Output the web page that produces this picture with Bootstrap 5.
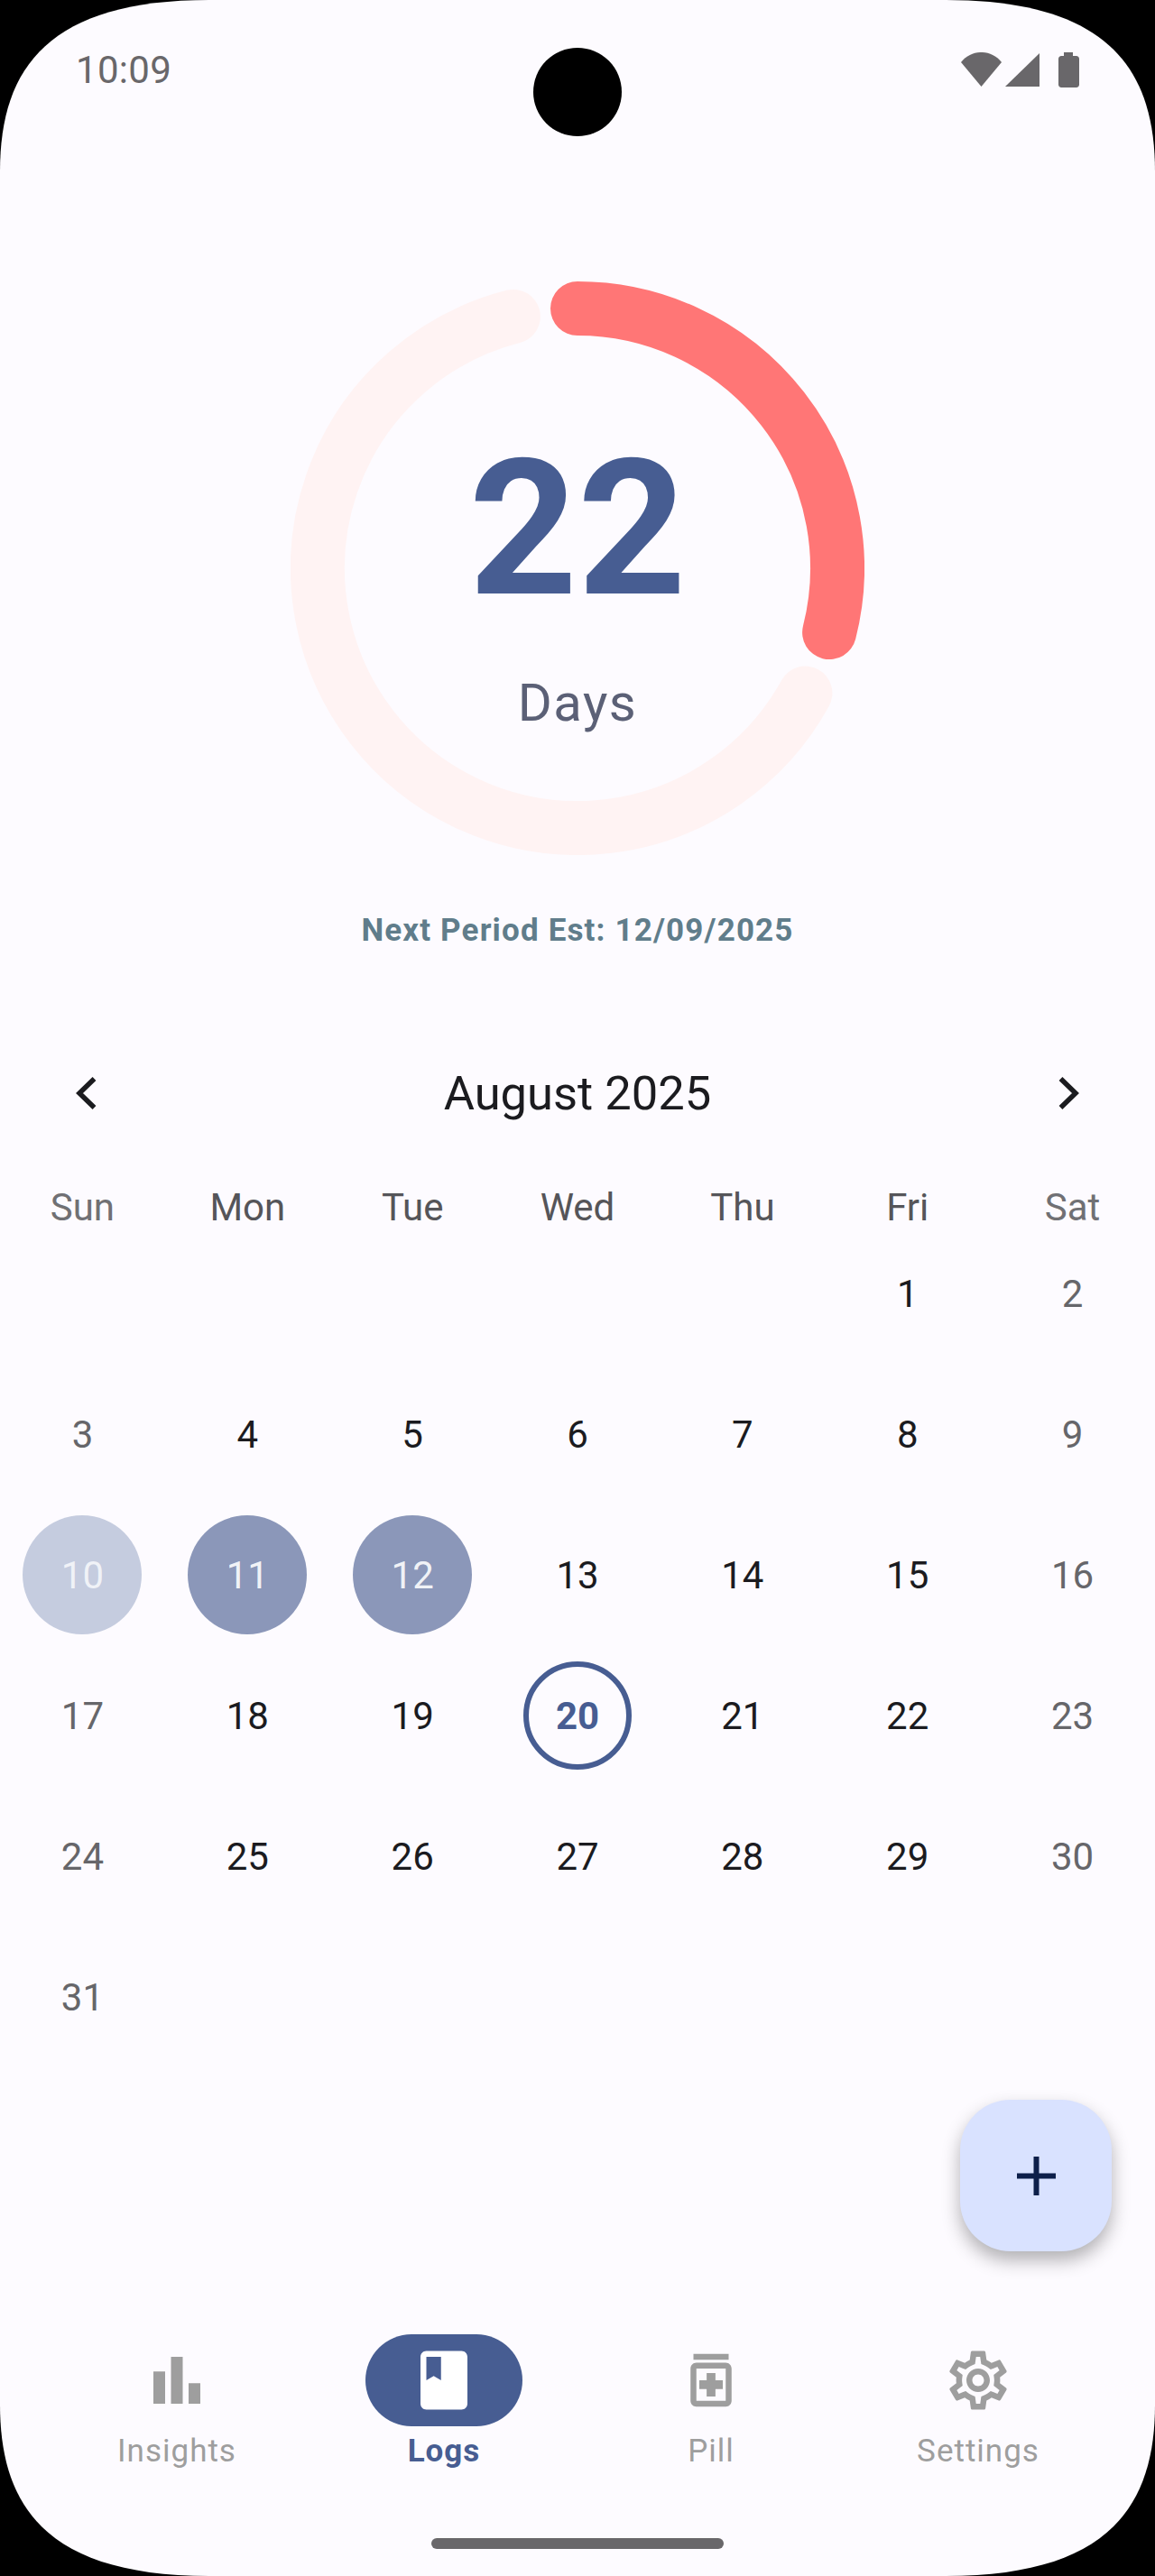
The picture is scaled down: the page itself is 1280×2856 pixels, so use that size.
<!DOCTYPE html>
<html lang="en">
<head>
    <meta charset="UTF-8">
    <meta name="viewport" content="width=device-width, initial-scale=1.0">
    <title>Logs</title>
    <link rel="stylesheet" href="https://cdn.jsdelivr.net/npm/bootstrap@5.3.0/dist/css/bootstrap.min.css">
    <style>
        body {
            background-color: #000;
            font-family: Roboto, "Liberation Sans", sans-serif;
        }
        .phone-screen {
            width: 1280px;
            height: 2856px;
            background-color: #fdfbff;
            clip-path: path('M0 190C0 73 56 0 232 0H1048C1224 0 1280 73 1280 190V2666C1280 2783 1224 2856 1048 2856H232C56 2856 0 2783 0 2666Z');
        }
        .status-bar {
            height: 152px;
            padding: 52px 84px 0 84px;
            font-size: 42px;
            line-height: 52px;
            letter-spacing: 0.3px;
            color: #69676a;
        }
        .camera-hole {
            width: 98px;
            height: 98px;
            top: 53px;
            left: 591px;
            background-color: #000;
        }
        .status-icons {
            left: 1065px;
            top: 58px;
        }
        .ring-box {
            width: 636px;
            height: 636px;
            margin: 160px auto 0;
            display: grid;
        }
        .ring-box > * {
            grid-area: 1 / 1;
        }
        .ring-track {
            stroke: #fff3f3;
        }
        .ring-value {
            stroke: #ff7676;
        }
        .ring-number {
            font-size: 210px;
            font-weight: 700;
            line-height: 246px;
            color: #475d92;
            margin-top: 151px;
        }
        .ring-label {
            font-size: 58px;
            line-height: 66px;
            letter-spacing: 1.5px;
            color: #5b6076;
            margin-top: 37px;
        }
        .next-period {
            height: 60px;
            margin-top: 54px;
            font-size: 35px;
            font-weight: 700;
            line-height: 60px;
            letter-spacing: 1.15px;
            color: #607d8b;
        }
        .cal-header {
            height: 104px;
            margin-top: 98px;
            padding: 0 84px;
            color: #1b1b1f;
        }
        .cal-title {
            font-size: 52.5px;
            line-height: 104px;
        }
        .week-row {
            height: 60px;
            margin-top: 44px;
            font-size: 42px;
            line-height: 62px;
            color: #555559;
        }
        .week-end {
            color: #707074;
        }
        .day-row {
            margin-top: 24px;
        }
        .day-cell {
            height: 132px;
            font-size: 42px;
            color: #1b1b1f;
        }
        .day-off {
            color: #66666a;
        }
        .day-dot {
            width: 132px;
            height: 132px;
            color: #fff;
        }
        .day-dot-soft {
            background-color: #c5ccdf;
            color: rgba(255, 255, 255, 0.75);
        }
        .day-dot-mid {
            background-color: #8b97b9;
            color: rgba(255, 255, 255, 0.9);
        }
        .day-today {
            width: 120px;
            height: 120px;
            border: 6px solid #475d92;
            color: #475d92;
            font-weight: 700;
        }
        .add-fab {
            width: 168px;
            height: 168px;
            right: 48px;
            top: 2328px;
            border-radius: 56px;
            background-color: #d9e2ff;
            box-shadow: 0 10px 20px rgba(0, 0, 0, 0.3);
        }
        .bottom-nav {
            height: 268px;
            padding: 0 48px;
        }
        .nav-slot {
            width: 296px;
            height: 102px;
        }
        .nav-pill {
            width: 174px;
            height: 102px;
            background-color: #475d92;
            border-radius: 51px;
        }
        .nav-text {
            margin-top: 7px;
            font-size: 35px;
            line-height: 42px;
            letter-spacing: 1px;
            color: #9e9e9e;
        }
        .nav-text-on {
            color: #475d92;
            font-weight: 700;
        }
        .home-bar {
            width: 324px;
            height: 12px;
            bottom: 30px;
            left: 478px;
            background-color: #69676a;
            border-radius: 6px;
        }
    </style>
</head>
<body class="m-0">
    <div class="phone-screen d-flex flex-column position-relative">

        <!-- status bar -->
        <div class="status-bar d-flex justify-content-between">
            <span>10:09</span>
        </div>
        <div class="camera-hole position-absolute rounded-circle"></div>
        <svg class="status-icons position-absolute" width="131" height="39" viewBox="0 0 131 39" fill="#69676a">
            <path d="M0 11 C12 -3.700 33 -3.700 45 11 L22.500 38z"/>
            <path d="M49 38 L87 1 V38z"/>
            <path d="M114 0h10v4h4c1 0 3 1 3 3v29c0 2-2 3-3 3h-17c-1 0-3-1-3-3V7c0-2 2-3 3-3h3z"/>
        </svg>

        <!-- cycle ring -->
        <div class="ring-box">
            <svg width="636" height="636" viewBox="-318 -318 636 636" fill="none" stroke-width="60" stroke-linecap="round">
                <path class="ring-track" d="M 252.400 138.600 A 288 288 0 1 1 -71.100 -279.100"/>
                <path class="ring-value" d="M 0 -288 A 288 288 0 0 1 279.100 71.100"/>
            </svg>
            <div class="text-center">
                <div class="ring-number">22</div>
                <div class="ring-label">Days</div>
            </div>
        </div>
        <div class="next-period text-center">Next Period Est: 12/09/2025</div>

        <!-- calendar -->
        <div class="cal-header d-flex justify-content-between align-items-center">
            <svg width="23" height="36" viewBox="0 0 23 36" fill="none" stroke="#1b1b1f" stroke-width="5.500"><path d="M20.500 2 L4 18 L20.500 34"/></svg>
            <span class="cal-title">August 2025</span>
            <svg width="23" height="36" viewBox="0 0 23 36" fill="none" stroke="#1b1b1f" stroke-width="5.500"><path d="M2.500 2 L19 18 L2.500 34"/></svg>
        </div>
        <div class="week-row row g-0 text-center">
            <div class="col week-end">Sun</div><div class="col">Mon</div><div class="col">Tue</div><div class="col">Wed</div><div class="col">Thu</div><div class="col">Fri</div><div class="col week-end">Sat</div>
        </div>
        <div class="row g-0">
            <div class="col day-cell"></div><div class="col day-cell"></div><div class="col day-cell"></div><div class="col day-cell"></div><div class="col day-cell"></div>
            <div class="col day-cell d-flex align-items-center justify-content-center">1</div>
            <div class="col day-cell day-off d-flex align-items-center justify-content-center">2</div>
        </div>
        <div class="day-row row g-0">
            <div class="col day-cell day-off d-flex align-items-center justify-content-center">3</div>
            <div class="col day-cell d-flex align-items-center justify-content-center">4</div>
            <div class="col day-cell d-flex align-items-center justify-content-center">5</div>
            <div class="col day-cell d-flex align-items-center justify-content-center">6</div>
            <div class="col day-cell d-flex align-items-center justify-content-center">7</div>
            <div class="col day-cell d-flex align-items-center justify-content-center">8</div>
            <div class="col day-cell day-off d-flex align-items-center justify-content-center">9</div>
        </div>
        <div class="day-row row g-0">
            <div class="col day-cell d-flex align-items-center justify-content-center"><span class="day-dot day-dot-soft rounded-circle d-flex align-items-center justify-content-center">10</span></div>
            <div class="col day-cell d-flex align-items-center justify-content-center"><span class="day-dot day-dot-mid rounded-circle d-flex align-items-center justify-content-center">11</span></div>
            <div class="col day-cell d-flex align-items-center justify-content-center"><span class="day-dot day-dot-mid rounded-circle d-flex align-items-center justify-content-center">12</span></div>
            <div class="col day-cell d-flex align-items-center justify-content-center">13</div>
            <div class="col day-cell d-flex align-items-center justify-content-center">14</div>
            <div class="col day-cell d-flex align-items-center justify-content-center">15</div>
            <div class="col day-cell day-off d-flex align-items-center justify-content-center">16</div>
        </div>
        <div class="day-row row g-0">
            <div class="col day-cell day-off d-flex align-items-center justify-content-center">17</div>
            <div class="col day-cell d-flex align-items-center justify-content-center">18</div>
            <div class="col day-cell d-flex align-items-center justify-content-center">19</div>
            <div class="col day-cell d-flex align-items-center justify-content-center"><span class="day-today rounded-circle d-flex align-items-center justify-content-center">20</span></div>
            <div class="col day-cell d-flex align-items-center justify-content-center">21</div>
            <div class="col day-cell d-flex align-items-center justify-content-center">22</div>
            <div class="col day-cell day-off d-flex align-items-center justify-content-center">23</div>
        </div>
        <div class="day-row row g-0">
            <div class="col day-cell day-off d-flex align-items-center justify-content-center">24</div>
            <div class="col day-cell d-flex align-items-center justify-content-center">25</div>
            <div class="col day-cell d-flex align-items-center justify-content-center">26</div>
            <div class="col day-cell d-flex align-items-center justify-content-center">27</div>
            <div class="col day-cell d-flex align-items-center justify-content-center">28</div>
            <div class="col day-cell d-flex align-items-center justify-content-center">29</div>
            <div class="col day-cell day-off d-flex align-items-center justify-content-center">30</div>
        </div>
        <div class="day-row row g-0">
            <div class="col day-cell day-off d-flex align-items-center justify-content-center">31</div>
            <div class="col day-cell"></div><div class="col day-cell"></div><div class="col day-cell"></div><div class="col day-cell"></div><div class="col day-cell"></div><div class="col day-cell"></div>
        </div>

        <!-- add button -->
        <div class="add-fab position-absolute d-flex align-items-center justify-content-center">
            <svg width="43" height="43" viewBox="0 0 43 43" fill="#0d1f4a"><path d="M18.500 0h6v18.500h18.500v6H24.500V43h-6V24.500H0v-6h18.500z"/></svg>
        </div>

        <!-- bottom nav -->
        <nav class="bottom-nav mt-auto d-flex">
            <div class="text-center">
                <div class="nav-slot d-flex align-items-center justify-content-center">
                    <svg width="78" height="78" viewBox="0 0 24 24" fill="#9e9e9e"><path d="M4 9h4v11H4zm12 4h4v7h-4zm-6-9h4v16h-4z"/></svg>
                </div>
                <div class="nav-text">Insights</div>
            </div>
            <div class="text-center">
                <div class="nav-slot d-flex align-items-center justify-content-center">
                    <div class="nav-pill d-flex align-items-center justify-content-center">
                        <svg width="78" height="78" viewBox="0 0 24 24" fill="#fff"><path d="M18 2H6c-1.100 0-2 .9-2 2v16c0 1.100.9 2 2 2h12c1.100 0 2-.9 2-2V4c0-1.100-.9-2-2-2zM6 4h5v8l-2.500-1.500L6 12V4z"/></svg>
                    </div>
                </div>
                <div class="nav-text nav-text-on">Logs</div>
            </div>
            <div class="text-center">
                <div class="nav-slot d-flex align-items-center justify-content-center">
                    <svg width="78" height="78" viewBox="0 0 24 24" fill="#9e9e9e" fill-rule="evenodd"><path d="M6 3h12v2H6zM7 6h10c1.100 0 2 .9 2 2v11c0 1.100-.9 2-2 2H7c-1.100 0-2-.9-2-2V8c0-1.100.9-2 2-2zm0 2v11h10V8H7zM10.500 9.500h3V12H16v3h-2.500v2.500h-3V15H8v-3h2.500z"/></svg>
                </div>
                <div class="nav-text">Pill</div>
            </div>
            <div class="text-center">
                <div class="nav-slot d-flex align-items-center justify-content-center">
                    <svg width="78" height="78" viewBox="0 0 24 24" fill="#9e9e9e"><path d="M19.430 12.980c.04-.32.07-.64.07-.98 0-.34-.03-.66-.07-.98l2.110-1.650c.19-.15.24-.42.12-.64l-2-3.460c-.09-.16-.26-.25-.44-.25-.06 0-.12.01-.17.03l-2.490 1c-.52-.4-1.080-.73-1.690-.98l-.38-2.650C14.460 2.180 14.250 2 14 2h-4c-.25 0-.46.18-.49.42l-.38 2.650c-.61.25-1.170.59-1.690.98l-2.490-1c-.06-.02-.12-.03-.18-.03-.17 0-.34.09-.43.25l-2 3.460c-.13.22-.07.49.12.64l2.110 1.650c-.04.32-.07.65-.07.98 0 .33.03.66.07.98l-2.110 1.650c-.19.15-.24.42-.12.64l2 3.460c.09.16.26.25.44.25.06 0 .12-.01.17-.03l2.490-1c.52.4 1.080.73 1.690.98l.38 2.650c.03.24.24.42.49.42h4c.25 0 .46-.18.49-.42l.38-2.650c.61-.25 1.170-.59 1.690-.98l2.490 1c.06.02.12.03.18.03.17 0 .34-.09.43-.25l2-3.460c.12-.22.07-.49-.12-.64l-2.110-1.650zm-1.980-1.710c.04.31.05.52.05.73 0 .21-.02.43-.05.73l-.14 1.130.89.7 1.080.84-.7 1.210-1.270-.51-1.040-.42-.9.68c-.43.32-.84.56-1.250.73l-1.060.43-.16 1.130-.2 1.350h-1.400l-.19-1.350-.16-1.130-1.060-.43c-.43-.18-.83-.41-1.230-.71l-.91-.7-1.060.43-1.270.51-.7-1.210 1.080-.84.89-.7-.14-1.130c-.03-.31-.05-.54-.05-.74s.02-.43.05-.73l.14-1.130-.89-.7-1.080-.84.7-1.210 1.270.51 1.040.42.9-.68c.43-.32.84-.56 1.250-.73l1.060-.43.16-1.130.2-1.350h1.390l.19 1.350.16 1.130 1.060.43c.43.18.83.41 1.230.71l.91.7 1.060-.43 1.270-.51.7 1.210-1.070.85-.89.7.14 1.130zM12 8c-2.210 0-4 1.790-4 4s1.790 4 4 4 4-1.790 4-4-1.790-4-4-4zm0 6c-1.100 0-2-.9-2-2s.9-2 2-2 2 .9 2 2-.9 2-2 2z"/></svg>
                </div>
                <div class="nav-text">Settings</div>
            </div>
        </nav>
        <div class="home-bar position-absolute"></div>
    </div>

    <script src="https://cdn.jsdelivr.net/npm/bootstrap@5.3.0/dist/js/bootstrap.bundle.min.js"></script>
</body>
</html>
